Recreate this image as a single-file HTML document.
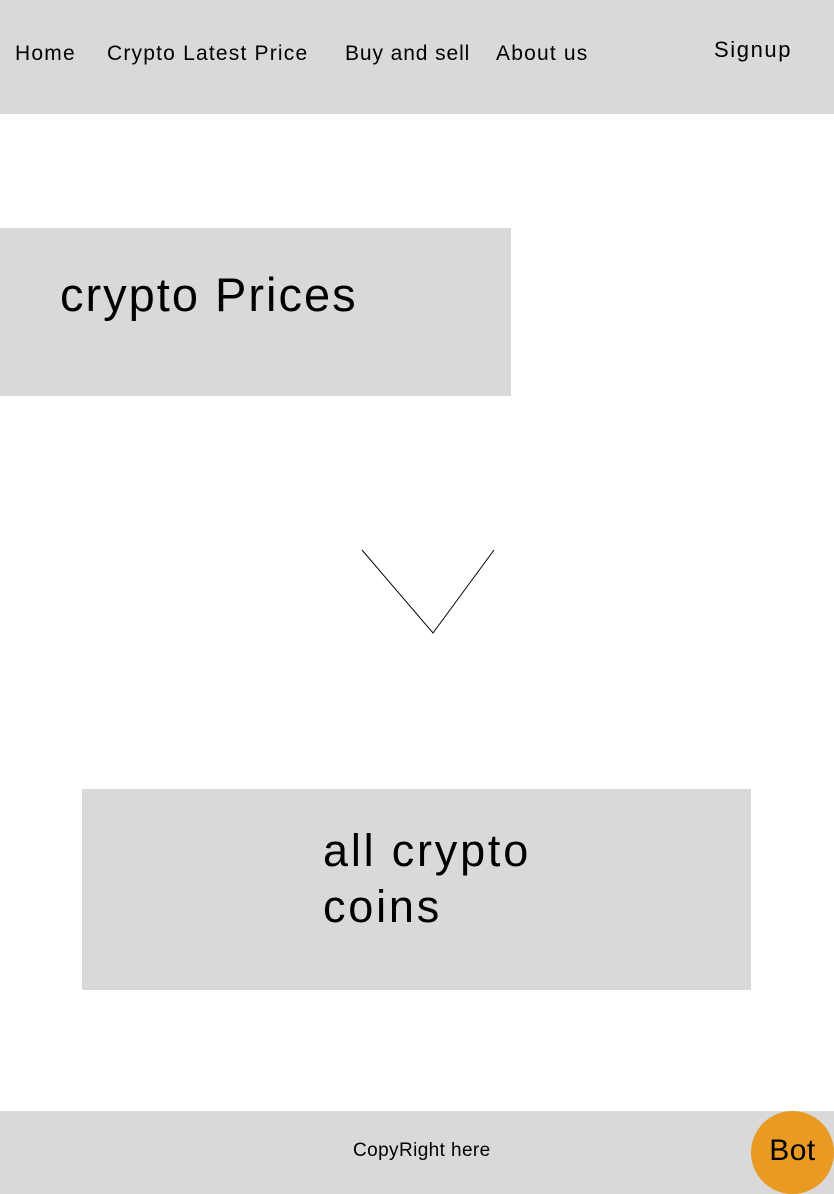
<!DOCTYPE html>
<html><head><style>
body{margin:0;width:834px;height:1194px;position:relative;background:#fff;font-family:"Liberation Sans",sans-serif;overflow:hidden;color:#000}
.a{position:absolute;white-space:nowrap}
.g{position:absolute;background:#d9d9d9}
</style></head><body>
<div class="g" style="left:0;top:0;width:834px;height:114px"></div>
<div class="a" style="left:15px;top:42px;font-size:21px;letter-spacing:1.2px">Home</div>
<div class="a" style="left:107px;top:42px;font-size:21px;letter-spacing:1.2px">Crypto Latest Price</div>
<div class="a" style="left:345px;top:42px;font-size:21px;letter-spacing:0.9px">Buy and sell</div>
<div class="a" style="left:496px;top:42px;font-size:21px;letter-spacing:1.2px">About us</div>
<div class="a" style="left:714px;top:37px;font-size:22px;letter-spacing:1.6px">Signup</div>
<div class="g" style="left:0;top:228px;width:511px;height:168px"></div>
<div class="a" style="left:60px;top:267px;font-size:47px;letter-spacing:2px">crypto Prices</div>
<svg class="a" style="left:0;top:0" width="834" height="700"><polyline points="362,550 433,633 494,550" fill="none" stroke="#000" stroke-width="1"/></svg>
<div class="g" style="left:82px;top:789px;width:669px;height:201px"></div>
<div class="a" style="left:323px;top:823px;font-size:45px;line-height:56px;letter-spacing:2.8px">all crypto<br>coins</div>
<div class="g" style="left:0;top:1111px;width:834px;height:83px"></div>
<div class="a" style="left:353px;top:1140px;font-size:19px;letter-spacing:0.4px">CopyRight here</div>
<div class="a" style="left:751px;top:1111px;width:83px;height:83px;border-radius:50%;background:#e89a22;font-size:30px;line-height:80px;text-align:center;letter-spacing:0.5px">Bot</div>
</body></html>
